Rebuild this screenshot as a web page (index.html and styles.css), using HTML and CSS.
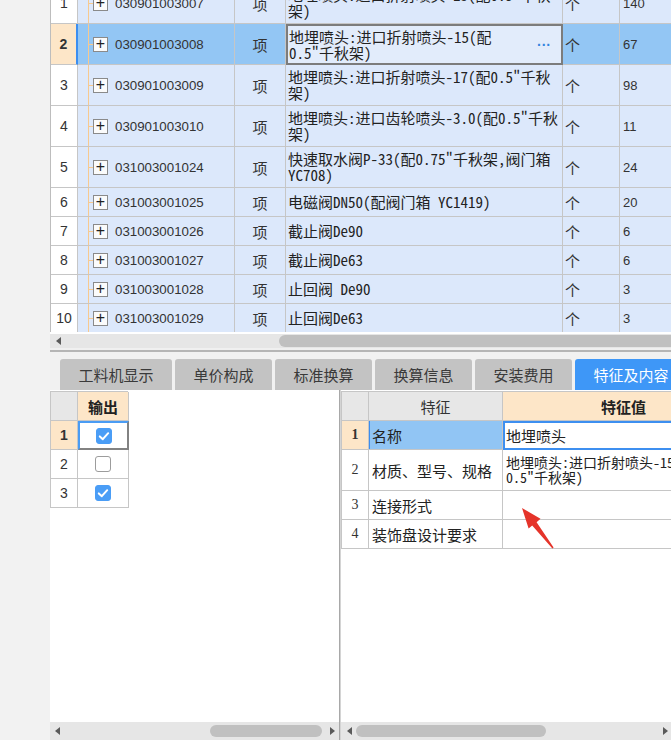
FILE: index.html
```html
<!DOCTYPE html>
<html lang="zh">
<head>
<meta charset="utf-8">
<title>清单</title>
<link rel="stylesheet" href="styles.css">
</head>
<body>
<div class="page">
  <div class="gutter"></div>
  <div class="main">
    <div class="top-grid">
      <div class="rows">
        <div class="row tall">
          <div class="num">1</div>
          <div class="code"><span class="plus">+</span><span class="codetxt">030901003007</span></div>
          <div class="unit">项</div>
          <div class="desc">地埋喷头:进口折射喷头-13(配0.5"千秋<br>架)</div>
          <div class="u2">个</div>
          <div class="qty">140</div>
        </div>
        <div class="row tall sel">
          <div class="num">2</div>
          <div class="code"><span class="plus">+</span><span class="codetxt">030901003008</span></div>
          <div class="unit">项</div>
          <div class="desc">地埋喷头:进口折射喷头-15(配<br>0.5"千秋架)<span class="dots">···</span></div>
          <div class="u2">个</div>
          <div class="qty">67</div>
        </div>
        <div class="row tall">
          <div class="num">3</div>
          <div class="code"><span class="plus">+</span><span class="codetxt">030901003009</span></div>
          <div class="unit">项</div>
          <div class="desc">地埋喷头:进口折射喷头-17(配0.5"千秋<br>架)</div>
          <div class="u2">个</div>
          <div class="qty">98</div>
        </div>
        <div class="row tall">
          <div class="num">4</div>
          <div class="code"><span class="plus">+</span><span class="codetxt">030901003010</span></div>
          <div class="unit">项</div>
          <div class="desc">地埋喷头:进口齿轮喷头-3.0(配0.5"千秋<br>架)</div>
          <div class="u2">个</div>
          <div class="qty">11</div>
        </div>
        <div class="row tall">
          <div class="num">5</div>
          <div class="code"><span class="plus">+</span><span class="codetxt">031003001024</span></div>
          <div class="unit">项</div>
          <div class="desc">快速取水阀P-33(配0.75"千秋架,阀门箱<br>YC708)</div>
          <div class="u2">个</div>
          <div class="qty">24</div>
        </div>
        <div class="row">
          <div class="num">6</div>
          <div class="code"><span class="plus">+</span><span class="codetxt">031003001025</span></div>
          <div class="unit">项</div>
          <div class="desc">电磁阀DN50(配阀门箱 YC1419)</div>
          <div class="u2">个</div>
          <div class="qty">20</div>
        </div>
        <div class="row">
          <div class="num">7</div>
          <div class="code"><span class="plus">+</span><span class="codetxt">031003001026</span></div>
          <div class="unit">项</div>
          <div class="desc">截止阀De90</div>
          <div class="u2">个</div>
          <div class="qty">6</div>
        </div>
        <div class="row">
          <div class="num">8</div>
          <div class="code"><span class="plus">+</span><span class="codetxt">031003001027</span></div>
          <div class="unit">项</div>
          <div class="desc">截止阀De63</div>
          <div class="u2">个</div>
          <div class="qty">6</div>
        </div>
        <div class="row">
          <div class="num">9</div>
          <div class="code"><span class="plus">+</span><span class="codetxt">031003001028</span></div>
          <div class="unit">项</div>
          <div class="desc">止回阀 De90</div>
          <div class="u2">个</div>
          <div class="qty">3</div>
        </div>
        <div class="row">
          <div class="num">10</div>
          <div class="code"><span class="plus">+</span><span class="codetxt">031003001029</span></div>
          <div class="unit">项</div>
          <div class="desc">止回阀De63</div>
          <div class="u2">个</div>
          <div class="qty">3</div>
        </div>
      </div>
    </div>

    <div class="sb top-sb">
      <span class="arr-l"></span>
      <span class="thumb top-thumb"></span>
    </div>
    <div class="sep"></div>

    <div class="tabbar">
      <div class="tab">工料机显示</div>
      <div class="tab">单价构成</div>
      <div class="tab">标准换算</div>
      <div class="tab">换算信息</div>
      <div class="tab">安装费用</div>
      <div class="tab active">特征及内容</div>
    </div>

    <div class="panels">
      <div class="panel left">
        <div class="panel-body">
          <div class="lgrid">
            <div class="hcell corner"></div>
            <div class="hcell peach bold">输出</div>
            <div class="rn peach bold">1</div>
            <div class="ck focus"><span class="cb on"><svg viewBox="0 0 16 16" width="16" height="16"><polyline points="3.8,8.4 6.8,11.2 12.2,5.2" fill="none" stroke="#fff" stroke-width="2" stroke-linecap="round" stroke-linejoin="round"/></svg></span></div>
            <div class="rn">2</div>
            <div class="ck"><span class="cb"></span></div>
            <div class="rn">3</div>
            <div class="ck"><span class="cb on"><svg viewBox="0 0 16 16" width="16" height="16"><polyline points="3.8,8.4 6.8,11.2 12.2,5.2" fill="none" stroke="#fff" stroke-width="2" stroke-linecap="round" stroke-linejoin="round"/></svg></span></div>
          </div>
        </div>
        <div class="sb lsb">
          <span class="arr-l"></span>
          <span class="thumb lthumb"></span>
          <span class="arr-r"></span>
        </div>
      </div>
      <div class="panel right">
        <div class="panel-body">
          <div class="rgrid">
            <div class="hcell corner"></div>
            <div class="hcell">特征</div>
            <div class="hcell peach bold">特征值</div>

            <div class="rn peach bold serif">1</div>
            <div class="fc blue">名称</div>
            <div class="fv edit">地埋喷头</div>

            <div class="rn tall serif">2</div>
            <div class="fc tall">材质、型号、规格</div>
            <div class="fv tall small">地埋喷头:进口折射喷头-15(配<br>0.5"千秋架)</div>

            <div class="rn serif">3</div>
            <div class="fc">连接形式</div>
            <div class="fv"></div>

            <div class="rn serif">4</div>
            <div class="fc">装饰盘设计要求</div>
            <div class="fv"></div>
          </div>
        </div>
        <div class="sb rsb">
          <span class="arr-l"></span>
          <span class="thumb rthumb"></span>
          <span class="arr-r"></span>
        </div>
      </div>
    </div>
  </div>

  <svg class="red-arrow" width="671" height="740" viewBox="0 0 671 740">
    <polygon points="522,508 540.5,518.8 536.6,522.2 553.6,547.6 552.4,548.4 532.2,525.6 528.6,528.6" fill="#e5342a"/>
  </svg>
</div>
</body>
</html>
```

FILE: styles.css
```css
* { box-sizing: border-box; }

body {
  margin: 0;
  background: #f2f2f2;
  font-family: "Noto Sans CJK SC", "Liberation Sans", sans-serif;
  color: #222;
}

.page {
  display: flex;
  width: 671px;
  height: 740px;
  overflow: hidden;
  position: relative;
}

.gutter { width: 50px; flex: none; }

.main {
  width: 621px;
  flex: none;
  display: flex;
  flex-direction: column;
  background: #fff;
  overflow: hidden;
}

/* ---------- top grid ---------- */
.top-grid {
  height: 332px;
  flex: none;
  overflow: hidden;
  border-left: 1px solid #bdbdbd;
}

.rows { margin-top: -17px; width: 700px; }

.row {
  display: grid;
  grid-template-columns: 27px 157px 51px 277px 57px 80px;
  height: 29px;
}
.row.tall { height: 41px; }

.row > div {
  border-right: 1px solid #c6c6c6;
  border-bottom: 1px solid #c6c6c6;
  display: flex;
  align-items: center;
  background: #dce8fb;
  white-space: nowrap;
  overflow: hidden;
}

.row > .num {
  background: #fff;
  justify-content: center;
  font-family: "Liberation Sans", sans-serif;
  font-size: 14px;
  color: #333;
}

.row > .code {
  background-color: #dce8fb;
  background-image:
    linear-gradient(#f7c98f, #f7c98f),
    linear-gradient(#f7c98f, #f7c98f);
  background-repeat: no-repeat;
  background-size: 1px 100%, 5px 1px;
  background-position: 10px 0, 10px 50%;
  padding-left: 15px;
}

.plus {
  width: 15px;
  height: 15px;
  border: 1px solid #8a8a8a;
  background: #fbfbfb;
  display: flex;
  align-items: center;
  justify-content: center;
  font-family: "Liberation Sans", sans-serif;
  font-size: 16px;
  line-height: 1;
  color: #222;
  padding-bottom: 1px;
}

.codetxt {
  margin-left: 7px;
  font-family: "Liberation Sans", sans-serif;
  font-size: 13.3px;
  color: #333;
}

.row > .unit {
  justify-content: center;
  font-size: 15px;
  color: #333;
}

.row > .desc {
  font-family: "Noto Sans Mono CJK SC", "Noto Sans CJK SC", sans-serif;
  font-size: 15px;
  line-height: 16px;
  padding-left: 2px;
  color: #222;
  position: relative;
}

.row > .u2 {
  font-size: 15px;
  padding-left: 2px;
  color: #333;
}

.row > .qty {
  font-family: "Liberation Sans", sans-serif;
  font-size: 13px;
  padding-left: 3px;
  color: #333;
}

.row.sel > div { background-color: #93c6f4; }
.row.sel > .num {
  background: #fde6c8;
  font-weight: bold;
  border-right: 2px solid #3c8ef0;
}
.row.sel > .desc {
  background: #e2ecfb;
  border: 2px solid #7c7c7c;
  padding-left: 1px;
}

.dots {
  position: absolute;
  right: 10px;
  top: 11px;
  font-family: "Liberation Sans", sans-serif;
  font-size: 14px;
  font-weight: bold;
  color: #3585de;
  letter-spacing: 0;
}

/* ---------- scrollbars ---------- */
.sb {
  height: 18px;
  flex: none;
  background: #e6e6e6;
  display: flex;
  align-items: center;
}

.top-sb {
  height: 16px;
  border-top: 2px solid #fff;
  padding-left: 6px;
}

.lsb { padding-left: 5px; padding-right: 4px; }
.rsb { padding-left: 6px; padding-right: 3px; }

.arr-l, .arr-r {
  width: 0;
  height: 0;
  border-top: 4px solid transparent;
  border-bottom: 4px solid transparent;
  flex: none;
}
.arr-l { border-right: 5px solid #5a5a5a; }
.arr-r { border-left: 5px solid #5a5a5a; margin-left: auto; }

.thumb {
  height: 12px;
  border-radius: 6px;
  background: #c0c0c0;
  flex: none;
}

.top-thumb { margin-left: 218px; width: 500px; }
.lthumb { margin-left: 150px; width: 112px; }
.rthumb { margin-left: 4px; width: 190px; }

.sep {
  height: 4px;
  flex: none;
  background: #f0f0f0;
  border-bottom: 2px solid #b5b5b5;
}

/* ---------- tabs ---------- */
.tabbar {
  height: 38px;
  flex: none;
  background: #f1f1f1;
  display: flex;
  align-items: flex-end;
  gap: 3px;
  padding-left: 10px;
  overflow: hidden;
}

.tab {
  height: 31px;
  padding: 0 18.5px;
  background: #c3c3c3;
  border-radius: 3px 3px 0 0;
  font-size: 15px;
  color: #3a3a3a;
  display: flex;
  align-items: center;
  white-space: nowrap;
  flex: none;
}
.tab.active { background: #3e97f7; color: #fff; }

/* ---------- bottom panels ---------- */
.panels {
  flex: 1;
  display: flex;
  min-height: 0;
}

.panel {
  display: flex;
  flex-direction: column;
  background: #fff;
}
.panel.left { width: 290px; border-right: 1px solid #a8a8a8; }
.panel.right { width: 331px; border-left: 1px solid #d4d4d4; }

.panel-body { flex: 1; overflow: hidden; padding-top: 1px; }

.lgrid, .rgrid {
  display: grid;
  border-top: 1px solid #c6c6c6;
  border-left: 1px solid #c6c6c6;
  grid-auto-rows: 29px;
}
.lgrid { grid-template-columns: 27px 51px; width: 78px; }
.rgrid { grid-template-columns: 27px 134px 242px; width: 403px; grid-template-rows: 29px 29px 41px 29px 29px; }

.lgrid > div, .rgrid > div {
  border-right: 1px solid #c6c6c6;
  border-bottom: 1px solid #c6c6c6;
  display: flex;
  align-items: center;
  white-space: nowrap;
  overflow: hidden;
}

.hcell {
  background: #e7e7e7;
  justify-content: center;
  font-size: 15px;
  color: #333;
}
.peach { background: #fde6c8 !important; }
.bold { font-weight: bold; color: #222; }

.rn {
  justify-content: center;
  font-family: "Liberation Sans", sans-serif;
  font-size: 14px;
  color: #333;
  background: #fff;
}
.rn.serif { font-family: "Liberation Serif", serif; font-size: 14px; }

.ck { justify-content: center; background: #fff; }
.ck.focus {
  border-top: 2px solid #4a9cf4;
  border-left: 2px solid #4a9cf4;
  border-right: 2px solid #828282 !important;
  border-bottom: 2px solid #828282 !important;
}

.cb {
  width: 16px;
  height: 16px;
  border-radius: 3px;
  border: 1px solid #9c9c9c;
  background: #fff;
  display: block;
}
.cb.on { background: #4a9df6; border-color: #4a9df6; }
.cb svg { display: block; margin: -1px; }

.fc {
  font-size: 15px;
  padding-left: 3px;
  color: #222;
  background: #fff;
}
.fc.blue { background: #91c5f4; box-shadow: inset 1px 0 #3c8ef0; }

.fv {
  font-size: 15px;
  padding-left: 3px;
  background: #fff;
  color: #222;
}
.fv.edit { border: 2px solid #3d8ff0 !important; padding-left: 1px; }
.fv.small {
  font-family: "Noto Sans Mono CJK SC", "Noto Sans CJK SC", sans-serif;
  font-size: 14px;
  line-height: 15px;
}

/* ---------- overlay arrow ---------- */
.red-arrow {
  position: absolute;
  left: 0;
  top: 0;
  pointer-events: none;
}
```
